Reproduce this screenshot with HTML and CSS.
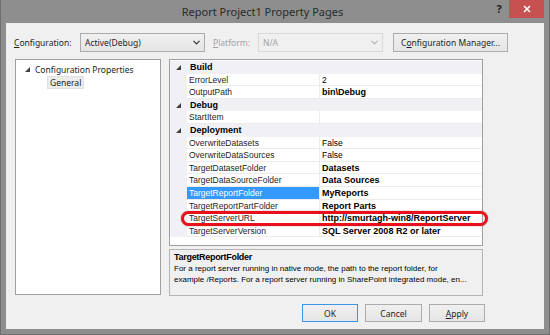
FILE: index.html
```html
<!DOCTYPE html>
<html lang="en">
<head>
    <meta charset="UTF-8">
    <title>Report Project1 Property Pages</title>
    <link rel="stylesheet" href="styles.css">
</head>
<body>
    <div class="window">
        <div class="titlebar">
            <span class="title">Report Project1 Property Pages</span>
            <span class="help">?</span>
            <span class="close">
                <svg width="8" height="8" viewBox="0 0 8 8"><path d="M1 1L7 7M7 1L1 7" stroke="#fff" stroke-width="1.5"/></svg>
            </span>
        </div>
        <div class="client">
            <div class="config-row">
                <span class="lbl lbl-config"><u>C</u>onfiguration:</span>
                <div class="combo">
                    <span>Active(Debug)</span>
                    <svg width="7" height="5" viewBox="0 0 7 5"><path d="M0.5 0.8L3.5 3.8L6.5 0.8" fill="none" stroke="#333" stroke-width="1.2"/></svg>
                </div>
                <span class="lbl lbl-platform disabled"><u>P</u>latform:</span>
                <div class="combo disabled">
                    <span>N/A</span>
                    <svg width="7" height="5" viewBox="0 0 7 5"><path d="M0.5 0.8L3.5 3.8L6.5 0.8" fill="none" stroke="#b5b5b5" stroke-width="1.2"/></svg>
                </div>
                <button class="btn btn-manager">C<u>o</u>nfiguration Manager...</button>
            </div>

            <div class="main">
                <div class="tree">
                    <div class="tree-node">
                        <svg class="arrow" width="5" height="5" viewBox="0 0 5 5"><path d="M5 0L5 5L0 5Z" fill="#404040"/></svg>
                        <span>Configuration Properties</span>
                    </div>
                    <div class="tree-child"><span class="tree-sel">General</span></div>
                </div>

                <div class="right">
                    <div class="grid">
                        <div class="row cat"><span class="gutter"><svg width="5" height="5" viewBox="0 0 5 5"><path d="M5 0L5 5L0 5Z" fill="#404040"/></svg></span><span class="cat-name">Build</span></div>
                        <div class="row"><span class="gutter"></span><span class="name">ErrorLevel</span><span class="value">2</span></div>
                        <div class="row"><span class="gutter"></span><span class="name">OutputPath</span><span class="value bold">bin\Debug</span></div>
                        <div class="row cat"><span class="gutter"><svg width="5" height="5" viewBox="0 0 5 5"><path d="M5 0L5 5L0 5Z" fill="#404040"/></svg></span><span class="cat-name">Debug</span></div>
                        <div class="row"><span class="gutter"></span><span class="name">StartItem</span><span class="value"></span></div>
                        <div class="row cat"><span class="gutter"><svg width="5" height="5" viewBox="0 0 5 5"><path d="M5 0L5 5L0 5Z" fill="#404040"/></svg></span><span class="cat-name">Deployment</span></div>
                        <div class="row"><span class="gutter"></span><span class="name">OverwriteDatasets</span><span class="value">False</span></div>
                        <div class="row"><span class="gutter"></span><span class="name">OverwriteDataSources</span><span class="value">False</span></div>
                        <div class="row"><span class="gutter"></span><span class="name">TargetDatasetFolder</span><span class="value bold">Datasets</span></div>
                        <div class="row"><span class="gutter"></span><span class="name">TargetDataSourceFolder</span><span class="value bold">Data Sources</span></div>
                        <div class="row"><span class="gutter"></span><span class="name selected">TargetReportFolder</span><span class="value bold">MyReports</span></div>
                        <div class="row"><span class="gutter"></span><span class="name">TargetReportPartFolder</span><span class="value bold">Report Parts</span></div>
                        <div class="row"><span class="gutter"></span><span class="name">TargetServerURL</span><span class="value bold">http://smurtagh-win8/ReportServer</span></div>
                        <div class="row"><span class="gutter"></span><span class="name">TargetServerVersion</span><span class="value bold">SQL Server 2008 R2 or later</span></div>
                        <div class="mark"></div>
                    </div>
                    <div class="desc">
                        <div class="desc-title">TargetReportFolder</div>
                        <div class="desc-text">For a report server running in native mode, the path to the report folder, for<br>example /Reports. For a report server running in SharePoint integrated mode, en...</div>
                    </div>
                </div>
            </div>

            <div class="buttons">
                <button class="btn btn-default">OK</button>
                <button class="btn btn-cancel">Cancel</button>
                <button class="btn"><u>A</u>pply</button>
            </div>
        </div>
    </div>
</body>
</html>
```

FILE: styles.css
```css
body {
    margin: 0;
    font-family: "Liberation Sans", Arial, sans-serif;
}

.window {
    width: 550px;
    height: 335px;
    box-sizing: border-box;
    background: #8e8e8e;
    border: 1px solid #6e6e6e;
    border-top: none;
    display: flex;
    flex-direction: column;
}

/* title bar */
.titlebar {
    height: 23px;
    display: flex;
    align-items: flex-start;
}

.title {
    flex: 1;
    padding-left: 35px;
    text-align: center;
    font-family: "Noto Sans", sans-serif;
    font-size: 11px;
    line-height: 23px;
    color: #2a2a2a;
}

.help {
    width: 20px;
    text-align: center;
    font-family: "Noto Sans", sans-serif;
    font-size: 11px;
    font-weight: bold;
    line-height: 18px;
    color: #222;
}

.close {
    width: 35px;
    height: 18px;
    margin-right: 5px;
    background: #c75050;
    display: flex;
    align-items: center;
    justify-content: center;
}

/* client area */
.client {
    flex: 1;
    margin: 0 5px 5px;
    padding: 10px 0 0 8px;
    background: #f0f0f0;
    display: flex;
    flex-direction: column;
    font-family: "Noto Sans", sans-serif;
    font-size: 8.5px;
    color: #1e1e1e;
}

.config-row {
    display: flex;
    align-items: center;
    height: 19px;
}

.lbl-config {
    width: 66px;
}

.lbl-platform {
    width: 45px;
    margin-left: 8px;
}

.disabled {
    color: #a3a3a3;
}

.combo {
    width: 125px;
    height: 19px;
    box-sizing: border-box;
    padding: 0 4px;
    border: 1px solid #acacac;
    background: linear-gradient(#f0f0f0, #e5e5e5);
    display: flex;
    align-items: center;
    justify-content: space-between;
}

.combo.disabled {
    background: #f0f0f0;
    border-color: #d9d9d9;
}

.btn {
    height: 18px;
    padding: 0;
    box-sizing: border-box;
    border: 1px solid #acacac;
    background: linear-gradient(#f0f0f0, #e5e5e5);
    font-family: "Noto Sans", sans-serif;
    font-size: 8.5px;
    color: #1e1e1e;
}

.btn-manager {
    width: 115px;
    height: 19px;
    margin-left: 10px;
}

.btn-default {
    border-color: #3c94e6;
}

/* main area */
.main {
    display: flex;
    gap: 8px;
    margin-top: 7px;
}

.tree {
    width: 146px;
    height: 236px;
    margin-left: 1px;
    box-sizing: border-box;
    border: 1px solid #a0a0a0;
    background: #fff;
    padding-top: 3px;
}

.tree-node {
    display: flex;
    align-items: center;
    height: 12px;
    padding-left: 9px;
}

.tree-node .arrow {
    margin-right: 5px;
}

.tree-child {
    padding: 1px 0 0 31px;
}

.tree-sel {
    display: inline-block;
    padding: 0 2px;
    line-height: 11px;
    background: #ececec;
    border: 1px solid #e0e0e0;
}

.right {
    width: 314px;
    display: flex;
    flex-direction: column;
    gap: 3px;
}

.grid {
    position: relative;
    height: 187px;
    box-sizing: border-box;
    border: 1px solid #a0a0a0;
    background: #fff;
    padding-top: 1px;
    font-family: "Liberation Sans", Arial, sans-serif;
    font-size: 8.5px;
}

.row {
    display: flex;
    height: 12.6px;
    line-height: 12px;
}

.gutter {
    width: 17px;
    flex: none;
    background: #f0f0f5;
    display: flex;
    align-items: center;
    justify-content: center;
}

.name {
    width: 133px;
    flex: none;
    box-sizing: border-box;
    padding-left: 2px;
    border-right: 1px solid #ececec;
    border-bottom: 1px solid #ececec;
    color: #1e1e1e;
}

.name.selected {
    background: #3399ff;
    color: #fff;
}

.value {
    flex: 1;
    padding-left: 2px;
    border-bottom: 1px solid #ececec;
    color: #000;
}

.value.bold {
    font-weight: bold;
    font-size: 9px;
}

.row.cat {
    background: #f0f0f5;
}

.cat-name {
    padding-left: 3px;
    font-weight: bold;
    font-size: 9px;
    color: #000;
}

.mark {
    position: absolute;
    left: 11px;
    top: 151px;
    width: 307px;
    height: 15px;
    box-sizing: border-box;
    border: 3px solid #e8101a;
    border-radius: 8px;
    box-shadow: 0 0 1px #600;
}

.desc {
    height: 47px;
    box-sizing: border-box;
    border: 1px solid #b4b4b4;
    background: #f0f0f0;
    padding: 2px 4px;
    font-family: "Liberation Sans", Arial, sans-serif;
    font-size: 8px;
    line-height: 11px;
    color: #000;
}

.desc-title {
    font-weight: bold;
    font-size: 9px;
    letter-spacing: -0.3px;
}

/* bottom buttons */
.buttons {
    width: 471px;
    margin-top: 8px;
    display: flex;
    justify-content: flex-end;
    gap: 7px;
}

.buttons .btn {
    width: 56px;
}

.buttons .btn-cancel {
    width: 57px;
}
```
